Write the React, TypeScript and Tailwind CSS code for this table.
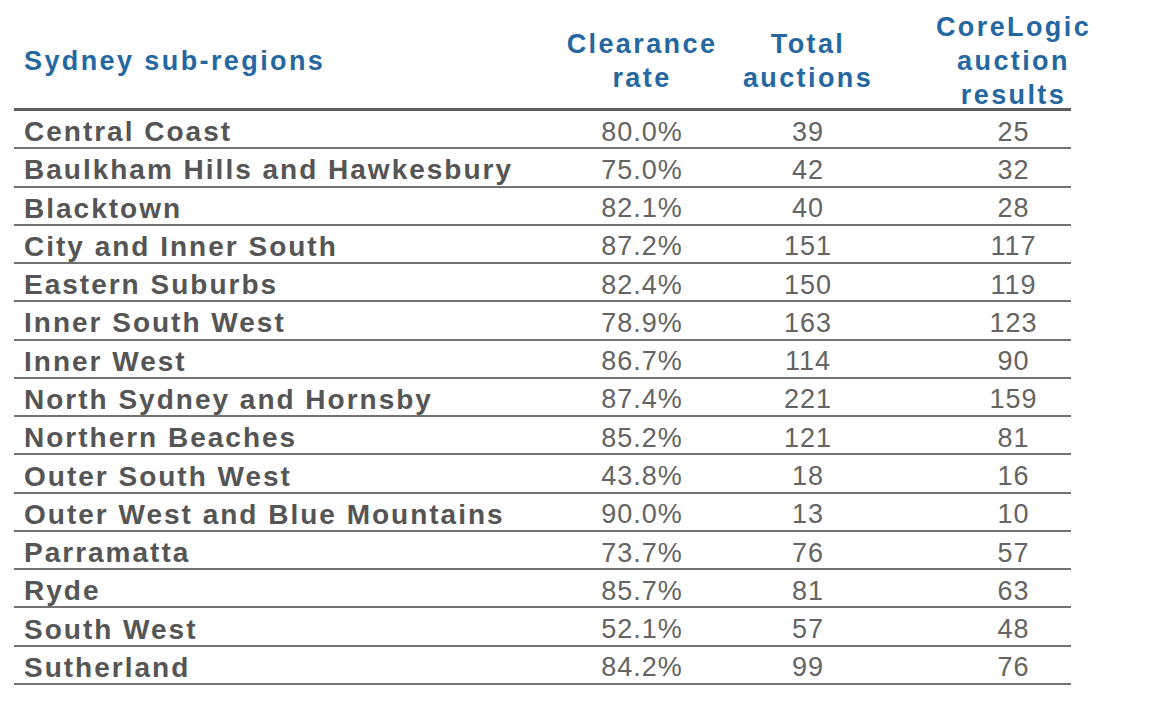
const rows: [string, string, number, number][] = [
  ["Central Coast", "80.0%", 39, 25],
  ["Baulkham Hills and Hawkesbury", "75.0%", 42, 32],
  ["Blacktown", "82.1%", 40, 28],
  ["City and Inner South", "87.2%", 151, 117],
  ["Eastern Suburbs", "82.4%", 150, 119],
  ["Inner South West", "78.9%", 163, 123],
  ["Inner West", "86.7%", 114, 90],
  ["North Sydney and Hornsby", "87.4%", 221, 159],
  ["Northern Beaches", "85.2%", 121, 81],
  ["Outer South West", "43.8%", 18, 16],
  ["Outer West and Blue Mountains", "90.0%", 13, 10],
  ["Parramatta", "73.7%", 76, 57],
  ["Ryde", "85.7%", 81, 63],
  ["South West", "52.1%", 57, 48],
  ["Sutherland", "84.2%", 99, 76],
];

const grid = "grid grid-cols-[536px_184px_148px_189px]";

export default function App() {
  return (
    <div className="w-[1160px] h-[704px] bg-white font-['Liberation_Sans',Arial,sans-serif] overflow-hidden">
      <div className="ml-[14px] w-[1057px]">
        {/* header */}
        <div className={`${grid} h-[111px] pt-[10px] items-center border-b-[3px] border-[#5c5c5c] text-[27px] font-bold tracking-[2.4px] text-[#2567a0] leading-[34px]`}>
          <div className="pl-[10px]">Sydney sub-regions</div>
          <div className="flex flex-col items-center">
            <span>Clearance</span>
            <span>rate</span>
          </div>
          <div className="flex flex-col items-center">
            <span>Total</span>
            <span>auctions</span>
          </div>
          <div className="pl-[74px] flex flex-col items-center">
            <span>CoreLogic</span>
            <span>auction</span>
            <span>results</span>
          </div>
        </div>

        {/* body */}
        {rows.map(([name, rate, total, results]) => (
          <div
            key={name}
            className={`${grid} h-[38.27px] pt-[6px] items-center border-b-2 border-[#727272]`}
          >
            <div className="pl-[10px] text-[28px] font-bold tracking-[2px] text-[#555] leading-none">
              {name}
            </div>
            <div className="text-center text-[27px] tracking-[1px] text-[#646464] leading-none">{rate}</div>
            <div className="text-center text-[27px] tracking-[1px] text-[#646464] leading-none">{total}</div>
            <div className="pl-[74px] text-center text-[27px] tracking-[1px] text-[#646464] leading-none">
              {results}
            </div>
          </div>
        ))}
      </div>
    </div>
  );
}
